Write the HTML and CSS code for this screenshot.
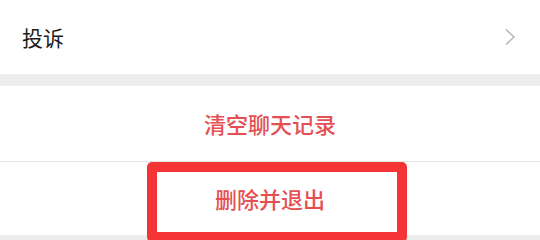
FILE: index.html
```html
<!DOCTYPE html>
<html>
<head>
    <link rel="stylesheet" href="styles.css">
</head>
<body>
    <div class="group">
        <div class="cell">
            <span class="cell-title">投诉</span>
            <svg class="arrow" width="12" height="18" viewBox="0 0 12 18">
                <polyline points="2,1.5 10,9 2,16.5" fill="none" stroke="#b8b8b8" stroke-width="1.6"/>
            </svg>
        </div>
    </div>

    <div class="group">
        <div class="action first">清空聊天记录</div>
        <div class="action last">
            删除并退出
            <div class="mark"></div>
        </div>
    </div>
</body>
</html>
```

FILE: styles.css
```css
:root {
    --bg-gray: #ededed;
    --line: #e6e6e6;
    --text-dark: #1b1b1b;
    --text-red: #e64f52;
    --mark-red: #f53436;
}

* {
    margin: 0;
    padding: 0;
    box-sizing: border-box;
}

body {
    background: var(--bg-gray);
    font-family: "Noto Sans CJK SC", "Noto Sans", sans-serif;
    width: 540px;
    height: 240px;
    overflow: hidden;
}

.group {
    background: #ffffff;
    margin-bottom: 12px;
}

.cell {
    height: 74px;
    display: flex;
    align-items: center;
    justify-content: space-between;
    padding: 0 24px 0 22px;
    font-size: 21px;
    color: var(--text-dark);
}

.arrow {
    display: block;
}

.action {
    display: flex;
    align-items: center;
    justify-content: center;
    font-size: 22px;
    font-weight: 500;
    color: var(--text-red);
    position: relative;
}

.action.first {
    height: 76px;
    border-bottom: 1px solid var(--line);
    padding-bottom: 1px;
}

.action.last {
    height: 73px;
    padding-bottom: 2px;
}

.mark {
    position: absolute;
    left: 147px;
    top: 0;
    width: 260px;
    height: 80px;
    border: 10px solid var(--mark-red);
    border-radius: 5px;
}
```
